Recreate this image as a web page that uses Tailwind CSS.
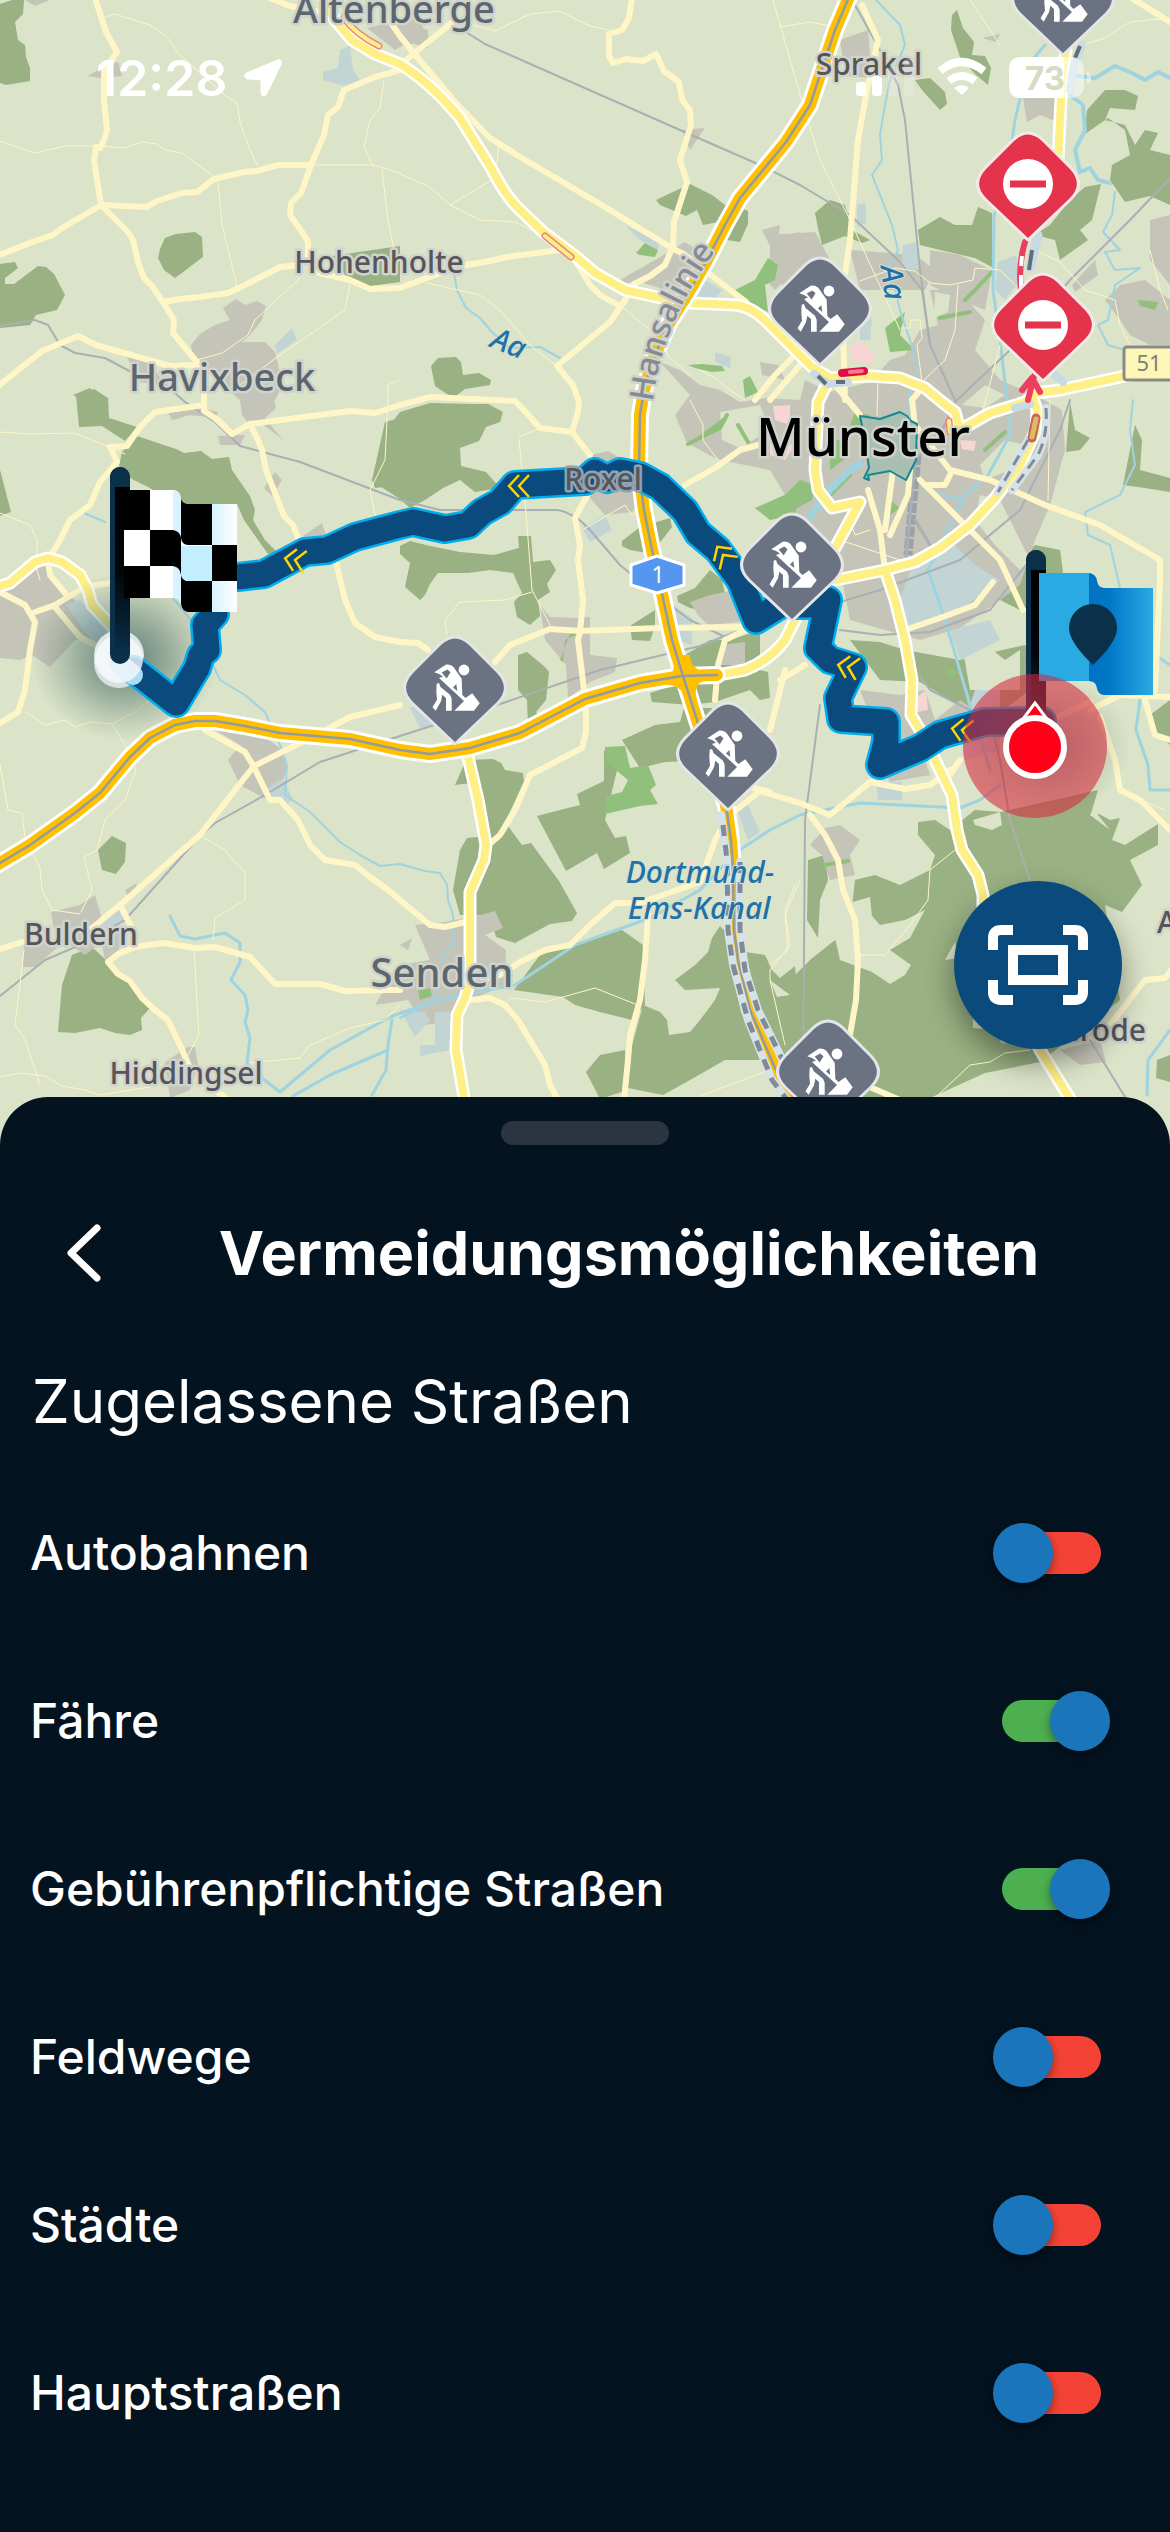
<!DOCTYPE html>
<html lang="de">
<head>
    <meta charset="UTF-8">
    <meta name="viewport" content="width=device-width, initial-scale=1.0">
    <title>Vermeidungsmöglichkeiten</title>
    <script src="https://cdn.jsdelivr.net/npm/@tailwindcss/browser@4"></script>
</head>
<body class="bg-[#03131f] font-['Inter',sans-serif] text-white">
    <div class="flex min-h-screen flex-col overflow-hidden">
        <!-- Map -->
        <div class="relative h-[1145px]">
            <svg class="block h-full w-full bg-[#dbe3c8]" viewBox="0 0 1170 1145" preserveAspectRatio="xMidYMin slice" fill="none" stroke-linejoin="round" stroke-linecap="round" role="img" aria-label="Karte Münster">
                <defs>
                    <g id="worker">
                        <path d="M0 0 L-43 -41 Q-58 -56 -43 -72 L-15 -100 Q0 -114 15 -100 L43 -72 Q58 -56 43 -41Z" fill="#6b7282" stroke="#e4e5e9" stroke-width="3"/>
                        <g fill="#fff" transform="translate(0 -1)">
                            <circle cx="9" cy="-73" r="5.4"/>
                            <path fill-rule="evenodd" d="M-20.700 -70.700 L-9.300 -78.300 Q-5 -79 -1.700 -76.300 L6.700 -64.300 L7.300 -48 L10.500 -45 L17.300 -49.700 L24.700 -39.700 L19 -32.300 H-.7 L9 -42 L-16 -65 L-12 -66.500 L-16 -69Z M-13.300 -70.500 L-7.700 -73.500 L-4.500 -70.700 L-8.300 -64.500Z M-2 -55.500 L1.300 -59 L2.300 -52Z"/>
                            <path d="M-18.300 -59.300 L-16 -60 L-14.500 -56 L-5 -48.300 L-3.300 -44.300 V-32.300 H-9 V-45 L-12.700 -48.300 L-14 -41.700 L-19.300 -32.300 L-22.500 -35.700 L-18 -43.300 L-18.700 -51.700Z"/>
                        </g>
                    </g>
                    <g id="closed">
                        <path d="M0 0 L-43 -41 Q-58 -56 -43 -72 L-15 -100 Q0 -114 15 -100 L43 -72 Q58 -56 43 -41Z" fill="#e6334c" stroke="#f1e9ea" stroke-width="3"/>
                        <circle cy="-56" r="25" fill="#fff"/>
                        <path d="M-18 -56H18" stroke="#e6334c" stroke-width="7" stroke-linecap="butt"/>
                    </g>
                    <path id="dir" d="M0 -11 L-10 0 L0 11 M10 -11 L0 0 L10 11" stroke="#ffd400" stroke-width="2.500" stroke-linecap="butt" stroke-linejoin="miter"/>
                    <path id="a1" d="M852 -10 L835 30 L810 105 L786 142 L740 198 L725 225 L707 260 L690 290 L668 325 L653 360 L644 390 L640 415 L639 470 L644 510 L652 550 L658 575 L672 640 L683 676 L697 720 L712 765 L726 805 L731 840 L733 870 L734 930 L738 960 L750 1010 L775 1068 L805 1115"/>
                    <path id="a43" d="M-10 869 L30 845 L75 813 L100 793 L130 757 L150 738 L175 725 L195 721 L215 721 L245 726 L280 733 L350 739 L400 750 L430 754 L470 748 L520 733 L585 699 L640 683 L682 676 L717 675"/>
                    <path id="hansa" d="M653 402 Q661 325 716 250"/>
                    <g id="trunk">
                        <path d="M322 -5 L335 20 L352 40 L375 54 L400 64 Q430 82 460 118 L490 166 Q505 195 517 207 L543 232 L575 256 L595 273 L625 290 L670 300 L690 303 L735 305 Q750 306 765 320 L812 367 L830 378 L870 376 L900 378 L925 388 L942 402 L955 412 L960 430 L990 413 L1025 402 L1036 393 L1060 390 L1125 376 L1180 368"/>
                        <path d="M830 378 L818 402 L815 470 L818 490 L832 508 L860 502 L835 548 M718 675 L745 670 Q770 660 785 640 L795 620"/>
                        <path d="M836 580 L885 570 L915 562 L940 548 L970 525 L995 498 L1020 465 L1036 430 L1037 410 L1032 396"/>
                        <path d="M885 570 L895 600 L905 640 L912 680 L911 715 L920 730 L935 760 L952 795 L957 830 L962 850 L978 875 L983 895 L983 930 L1040 1050 L1080 1115"/>
                        <path d="M468 757 L478 800 L486 845 L484 860 L470 892 L470 980 L465 998 L457 1015 L456 1050 L467 1115"/>
                        <path d="M-5 588 L10 583 L35 562 L48 558 L62 562 L80 575 L88 590 L92 605 L120 635"/>
                        <path d="M1066 50 L1062 80 L1060 120 L1058 160"/>
                    </g>
                    <linearGradient id="pole" x1="0" y1="0" x2="0" y2="1">
                        <stop offset="0" stop-color="#000"/><stop offset=".5" stop-color="#00060b"/><stop offset="1" stop-color="#0a304a"/>
                    </linearGradient>
                    <linearGradient id="sheen" x1="0" y1="0" x2="1" y2="0">
                        <stop offset="0" stop-color="#d6f3ff"/><stop offset="1" stop-color="#fff"/>
                    </linearGradient>
                    <linearGradient id="fold" x1="0" y1="0" x2="1" y2="0">
                        <stop offset="0" stop-color="#0072c3"/><stop offset=".3" stop-color="#0076c6"/><stop offset="1" stop-color="#2aaae3"/>
                    </linearGradient>
                    <radialGradient id="shade">
                        <stop offset="0" stop-color="#2f5a5c" stop-opacity=".75"/><stop offset=".5" stop-color="#3d6561" stop-opacity=".4"/><stop offset="1" stop-color="#5c7d6c" stop-opacity="0"/>
                    </radialGradient>
                </defs>

                <!-- Forests -->
                <g fill="#99b183">
                    <path d="M0 4 L12 0 H24 L23 14 L15 22 L18 40 L25 45 L26 57 L30 68 V81 L6 85 L0 83Z"/>
                    <path d="M0 264 L15 262 L18 268 L5 278 V284 L14 284 L38 266 L46 267 L54 274 L65 295 L57 310 L36 315 L30 325 L0 328Z"/>
                    <path d="M165 238 L176 234 L195 232 L202 237 L203 257 L175 278 L164 270 L158 258 L160 249Z"/>
                    <path d="M76 395 L94 389 L108 398 L109 418 L137 427 L125 441 L102 426 L79 427Z"/>
                    <path d="M137 436 L176 449 L184 453 L201 451 L212 459 L229 457 L232 470 L250 496 L255 510 L253 520 L265 540 L277 552 L268 554 L244 520 L237 504 L180 510 L150 488 L130 478 L119 466 L122 452Z"/>
                    <path d="M400 412 L430 403 L474 404 L488 404 L503 412 L500 422 L486 427 L479 441 L460 448 L461 466 L469 468 L486 472 L500 488 L475 492 L460 480 L443 488 L425 500 L410 508 L400 499 L378 485 L372 480 L393 421Z"/>
                    <path d="M431 366 L438 358 L456 357 L461 362 L463 375 L479 373 L491 380 L490 385 L465 389 L453 398 L435 386Z"/>
                    <path d="M400 546 L410 541 L430 546 L460 552 L494 555 L519 548 L518 536 L531 536 L533 562 L550 560 L556 570 L547 584 L550 592 L538 600 L540 616 L530 625 L517 617 L514 602 L522 593 L513 573 L490 570 L468 573 L438 573 L430 584 L425 595 L420 600 L405 587 L410 563 L400 554Z"/>
                    <path d="M656 200 L690 184 L712 195 L725 205 L732 204 L748 211 L748 224 L740 242 L727 240 L718 222 L703 225 L697 210 L686 216 L660 205Z"/>
                    <path d="M518 655 L527 652 L545 667 L549 672 L546 700 L536 712 L545 730 L528 727 L527 700 L518 690Z"/>
                    <path d="M622 541 L640 527 L670 518 L672 527 L662 540 L648 553 L630 550 L622 546Z M677 596 L695 588 L710 570 L722 580 L725 594 L712 612 L690 608 L678 602Z M630 626 L655 610 L655 626 L650 641 L632 640Z M730 640 L760 630 V670 L768 672 L770 698 L760 700 L750 690 L715 702 L690 705 L652 702 L650 693 L683 683 L685 655 L710 640Z"/>
                    <path d="M455 785 L466 760 L493 759 L501 763 L505 770 L523 773 L524 782 L505 822 L522 845 L531 843 L559 881 L577 913 L572 921 L550 924 L515 943 L496 937 L490 915 L460 915 L453 890 L460 850 L467 838 L478 837 L480 782Z"/>
                    <path d="M537 816 L568 808 L580 805 L577 794 L604 781 V750 L617 756 L619 762 L605 820 L615 838 L626 836 L630 853 L604 869 L597 853 L566 871Z M622 740 L655 725 L680 722 L684 708 L712 708 L720 760 L665 762 L640 768Z"/>
                    <path d="M514 990 L540 955 L622 930 L643 945 L645 1005 L632 1020 L600 1012 L575 1005 L563 997Z"/>
                    <path d="M643 1005 L660 1012 L667 1020 L669 1035 L690 1032 L700 1020 L715 1000 L720 988 L685 990 L675 980 L695 965 L708 952 L712 938 L720 926 L745 952 L765 955 L772 970 L780 978 L795 966 L803 1060 L760 1060 L725 1060 L690 1080 L663 1095 L628 1088 L628 1060Z M586 1072 L600 1055 L625 1050 L628 1090 L600 1099Z"/>
                    <path d="M58 1032 L62 985 L72 955 L92 947 L108 962 L120 975 L135 983 L141 995 L150 1008 L141 1018 L142 1030 L130 1035 L115 1033 L100 1028 L75 1033Z"/>
                    <path d="M98 850 L112 836 L126 843 L125 862 L116 874 L102 870Z"/>
                    <path d="M957 10 L963 28 L974 42 L972 55 L985 56 L991 68 L988 85 L975 74 L960 57 L951 30 L952 15Z M915 80 L930 78 L945 92 L947 104 L940 110 L922 90Z"/>
                    <path d="M815 213 L830 200 L845 205 L852 230 L870 240 L862 243 L845 236 L822 245 L818 228Z M918 230 L940 217 L955 225 L972 225 L978 207 L992 213 L992 267 L975 258 L940 250 L920 245Z"/>
                    <path d="M1085 134 L1087 110 L1105 90 L1125 90 L1138 96 L1135 110 L1110 108 L1105 120 L1125 125 L1135 145 L1145 130 L1158 133 L1150 150 L1170 155 V205 L1150 196 L1125 202 L1110 180 L1112 165 L1130 155 L1125 130 L1108 118Z M1035 235 L1050 225 L1070 200 L1085 187 L1101 184 L1092 220 L1080 230 L1088 240 L1060 260 L1055 240Z"/>
                    <path d="M1070 402 L1075 430 L1090 438 L1080 450 L1066 452Z M1135 425 L1142 440 L1140 470 L1170 478 V492 L1145 488 L1123 485Z M1010 575 L1035 545 L1060 550 L1063 572 L1045 600 L1020 610 L1000 600Z"/>
                    <path d="M850 640 L880 642 L905 650 L960 660 L1025 645 L1035 660 L1030 690 L990 720 L950 700 L920 682 L880 680Z"/>
                    <path d="M918 822 L935 820 L950 830 L975 810 L1000 812 L1098 790 L1092 810 L1110 820 L1120 818 L1112 840 L1125 845 L1158 824 L1158 845 L1130 860 L1142 885 L1122 912 L1105 905 L1120 1000 L1040 1062 L985 1073 L930 1098 H790 L770 1050 L770 1000 L810 960 L835 940 L848 950 L850 925 L855 880 L875 875 L900 885 L930 870 L935 855 L918 835Z"/>
                    <path d="M808 860 L825 855 L828 880 L820 900 L818 938 L807 920Z"/>
                    <path d="M1157 1060 L1170 1055 V1082 L1156 1078Z M0 470 L11 512 L0 516Z M1170 700 L1150 715 L1155 732 L1170 745Z M385 422 L400 418 V485 L375 488 L372 480Z M332 256 L400 246 V282 L370 286 L345 275Z M73 395 L90 388 L94 394 L82 400Z"/>
                </g>
                <!-- Clearings -->
                <g fill="#dbe3c8">
                    <path d="M842 905 L870 897 L872 916 L880 925 L905 920 L925 910 L910 938 L890 950 L911 965 L905 975 L890 984 L872 972 L840 960 L835 938Z M770 980 L790 995 L777 997Z M945 960 L955 942 L958 958Z M973 820 L1000 812 L1002 825 L992 830 L975 825Z M1103 790 L1098 815 L1110 830 L1090 815Z M973 1018 L1000 1030 L973 1028Z"/>
                </g>
                <!-- Settlements -->
                <g fill="#c5c4b8">
                    <path d="M88 76 L105 66 L118 62 L122 76 L100 78Z M25 0 H50 L35 6Z"/>
                    <path d="M191 345 L200 334 L215 325 L230 320 L223 308 L236 299 L245 305 L257 301 L266 306 L262 320 L250 335 L242 342 L265 342 L275 352 L283 385 L275 400 H240 L205 370 L193 360Z M126 356 L150 362 L165 385 L140 382Z"/>
                    <path d="M240 400 H274 L276 408 L265 418 L283 440 L278 436 L262 424 L250 425 L242 415Z M168 412 L200 408 L218 412 L216 418 L190 415 L172 420Z M218 436 L245 435 L240 445 L220 445Z M264 488 L275 472 L282 480 L272 496Z M303 536 L322 523 L326 535 L310 540Z"/>
                    <path d="M367 28 L400 20 L428 30 L428 48 L408 42 L395 50Z M400 18 L420 20 L428 40 L405 46Z M840 40 L868 30 L872 78 L845 76Z M1023 98 L1055 98 L1058 122 L1040 115 L1027 122Z M982 38 L1000 34 L996 42Z"/>
                    <path d="M620 280 L655 260 L685 242 L697 250 L690 292 L660 288 L640 282 L622 283Z M682 130 L705 128 L690 150Z M762 230 L780 225 L778 238 L800 232 V265 L775 290 L766 280 L772 250Z"/>
                    <path d="M0 595 L20 575 L45 565 L60 590 L75 600 L110 640 L75 640 L50 667 L32 655 L20 660 L0 658Z M228 760 L240 745 L215 730 L262 735 L280 748 L287 768 L280 790 L268 800 L240 785Z"/>
                    <path d="M591 455 L608 451 L620 458 L645 470 L650 490 L632 512 L605 515 L590 498 L580 480Z M540 605 L550 617 L575 618 L590 617 L590 640 L590 655 L617 658 L615 672 L590 682 L568 698 L566 665 L545 640Z M690 602 L710 595 L735 590 L740 622 L708 625 L698 615Z M722 645 L745 642 L745 665 L720 665Z"/>
                    <path d="M415 925 L445 922 L480 915 L495 911 L503 928 L485 935 L506 950 L505 985 L470 1000 L460 1020 L425 1025 L408 1000 L375 1005 L378 1000 L400 965 L430 960Z M400 945 L412 938 L408 950Z"/>
                    <path d="M51 912 L80 905 L95 895 L101 915 L98 945 L85 955 L55 935Z M24 940 L60 945 L35 967 H23Z M100 935 L122 930 L118 955 L105 960Z M165 1062 L188 1047 L195 1047 L198 1065 L190 1090 L170 1098Z M125 890 L137 883 L130 900Z"/>
                    <path d="M810 845 L825 828 L840 825 L860 840 L850 855 L855 875 L830 880 L822 855Z M1060 1050 L1100 1040 L1106 1062 L1080 1065Z"/>
                    <path d="M770 235 L815 232 L830 260 L850 285 L825 320 L790 300 L770 262Z M930 250 L960 255 L970 260 L992 270 L985 310 L960 300 L930 285Z M1150 220 L1170 215 V285 L1150 260Z M1072 285 L1095 260 L1098 275 L1075 292Z M1105 300 L1120 285 L1145 280 L1170 300 V345 L1150 345 L1130 335 L1120 320Z"/>
                    <path d="M660 362 L680 370 L700 385 L720 390 L740 402 L765 398 L800 400 L805 380 L830 392 L870 382 L890 360 L905 355 L920 330 L938 325 L930 290 L958 290 L985 320 L975 350 L1000 380 L1035 395 L1062 410 L1065 450 L1050 505 L1035 540 L1020 585 L1000 600 L960 628 L920 640 L850 620 L842 580 L800 520 L770 470 L730 462 L715 458 L687 443 L675 415 L690 395Z"/>
                    <path d="M860 690 L900 695 L925 690 L935 720 L960 700 L975 710 L925 760 L930 775 L890 782 L880 760 L870 715Z M760 362 L778 365 L785 380 L762 375Z M850 250 L915 255 L935 270 L925 290 L860 290Z M795 450 L770 455 L785 490 L815 510 L820 480Z"/>
                </g>
                <g fill="#dbe3c8">
                    <path d="M980 495 L1000 500 L1015 530 L1030 560 L1020 570 L995 545 L975 520Z M962 645 L980 640 L1005 660 L1020 650 L1020 690 L970 690Z M935 292 L950 295 L948 312 L934 318Z M1005 440 L1025 445 L1010 470 L985 480 L980 465Z M962 405 L985 385 L1005 395 L985 408Z M720 412 L760 405 L770 430 L740 448 L722 440Z"/>
                </g>
                <!-- Parks -->
                <g fill="#91c07c">
                    <path d="M605 747 L625 746 L630 768 L648 765 L656 785 L650 790 L658 804 L640 806 L605 814 L606 796 L622 792 L628 780 L606 762Z"/>
                    <path d="M735 290 L755 280 L768 258 L778 265 L775 280 L765 285 L768 312 L745 302Z M636 253 L645 243 L658 250 L655 257 L640 255Z M885 328 L905 312 L900 335 L915 350 L890 352Z M755 508 L800 488 L795 515 L770 520Z M770 510 L800 480 L815 485 L812 500 L790 512 L770 520Z M688 365 L702 364 L722 366 L725 371 L712 372 L695 368Z M743 380 L750 376 L758 392 L745 398Z M830 440 L845 440 L850 455 L830 470Z M855 412 L870 415 L865 430 L850 425Z M1138 300 L1158 302 L1155 310 L1140 306Z M890 500 L900 508 L890 515Z M418 990 L430 988 L432 996 L420 1000Z M560 660 L570 634 L582 632 L565 640 L563 662Z M945 668 L960 670 L950 680Z"/>
                    <path d="M688 444 L720 428 L727 415 M738 425 L748 442 M965 300 L975 290 L992 272 M940 318 L970 312 M945 570 L975 595 M825 865 L848 861 M830 495 L850 475 M985 450 L1005 432" stroke="#91c07c" stroke-width="4"/>
                </g>
                <!-- Industrial and water areas -->
                <g fill="#c3d4d5">
                    <path d="M340 50 L350 46 L353 70 L360 80 L345 86 L323 80 V72 L338 68Z M275 345 L292 328 L297 340 L277 354Z M626 226 L660 242 L658 250 L640 240Z M705 280 L722 290 L715 300 L695 298Z M715 352 L731 357 L730 368 L715 362Z M903 245 L918 242 L920 270 L902 268Z M857 205 L866 203 L866 223 L857 227Z M998 262 L1016 255 L1020 280 L1005 300 L995 290Z M860 320 L872 318 L870 340 L860 340Z"/>
                    <path d="M582 528 L605 515 L612 530 L590 542Z M410 708 L430 702 L445 722 L420 728Z M673 605 L692 618 L692 645 L675 640Z M96 925 L120 906 L128 920 L110 930Z M265 790 L283 778 L293 800 L285 805Z M66 605 L80 600 L108 630 L95 645Z M737 810 L748 805 L760 832 L748 840Z M400 1010 L425 1012 L430 1020 L415 1037Z M435 1012 L450 1012 L450 1050 L420 1056 V1045 L435 1045Z M876 782 H902 V800 L878 800Z"/>
                    <path d="M925 560 L955 545 L975 565 L1000 580 L960 610 L905 628 L900 600 L910 570Z M950 630 L990 620 L1000 640 L960 660Z M975 690 H1000 V750 L965 760 L960 735Z"/>
                </g>
                <g fill="#f6d5d3">
                    <path d="M850 345 L863 341 L875 356 L872 364 L852 361Z M773 406 L790 405 L790 425 L775 420Z M770 440 L795 445 L785 460 L770 455Z M960 440 L976 441 L974 451 L962 449Z M916 698 L926 690 L928 710 L918 712Z M684 861 L696 860 L694 870Z"/>
                </g>

                <!-- Rivers -->
                <g stroke="#9fd3e0" stroke-width="2">
                    <path d="M454 273 L457 290 L466 308 L480 318 L492 332 L510 348 L540 347 L560 358"/>
                    <path d="M876 0 L900 25 L905 45 L890 80 L885 105 L880 135 L882 160 L872 175 L880 195 L892 225 L898 250 L890 268 L900 310 L910 340 L918 370 L911 390 L908 412"/>
                    <path d="M1066 60 L1070 75 L1095 78 L1115 66 L1130 72 L1145 80 L1158 72 L1170 78 M1070 95 L1083 105 L1085 130 L1075 150 L1080 172 L1090 168 L1098 180 L1110 183" stroke-width="4"/>
                    <path d="M1045 45 L1028 65 L1015 120 L1005 190 L994 215 L993 290 L1000 340 L1007 400" stroke-width="3"/>
                    <path d="M1115 192 L1112 215 L1103 232 L1120 250 L1105 252 L1115 270 L1140 268 L1115 285 L1108 320 L1098 325 L1108 345 L1125 350"/>
                    <path d="M1133 400 L1130 430 L1135 465 L1120 495 L1085 512 L1088 535 L1110 545 L1120 588"/>
                    <path d="M1010 400 V435 L988 475 L965 495 L945 535 L928 570 M925 490 L960 500 M928 570 L945 620 L970 705 L990 770" stroke-width="3"/>
                    <path d="M84 513 L105 522 M173 598 L195 625 L213 665 L220 680 L245 695 L265 712 L280 745 L287 765 L285 795 L310 812 L340 842 L360 855 L380 866 L400 864 L425 871 L440 873 L447 885 L448 900 L453 915 L454 942 L443 955 L442 980 L430 1003 L400 1018"/>
                    <path d="M170 916 L180 936 L195 939 L225 933 L240 943 L240 962 L231 980 L245 995 L248 1010 L245 1022 L250 1038 L247 1063 L258 1075 L280 1092 L330 1050 L390 1017 L415 1008 L455 996 L515 985 L545 965 L575 945 L650 918 L700 890 L735 853 L770 830 L800 815 L860 803 L960 808 L980 800 L1000 785 M293 1096 L330 1075 L388 1050 M372 1095 L386 1070 L388 1045 L392 1020" stroke-width="3"/>
                    <path d="M1140 700 L1136 730 L1148 765 L1150 790 H1170 M1170 1030 L1148 1060 L1147 1095 M1155 655 L1170 665" stroke-width="3"/>
                    <path d="M810 517 L830 490 L850 470 L860 464" stroke-width="7"/>
                </g>

                <!-- Railways -->
                <g stroke="#a9b0b3" stroke-width="2">
                    <path d="M0 326 L35 320 L48 325 L60 345 L75 353 L105 358 L150 382 L165 384 L185 402 L215 422 L240 446 L300 462 L400 500 L440 510 H558 Q575 513 590 530 L620 565 L650 590 L690 620 L725 637"/>
                    <path d="M466 32 L485 44 L680 130 L760 165 L800 185 L850 215 L900 262 L922 290 L930 345 L955 400"/>
                    <path d="M855 5 L880 50 L898 85 L905 120 L912 190 L920 270 L930 345"/>
                    <path d="M1170 178 L1130 220 L1070 280 L1010 350 L955 402"/>
                    <path d="M-5 1000 L45 960 L80 945 L125 920 L200 836 L215 823 L265 795 L320 762 L400 736 L500 704 L600 670 L700 646 L760 622"/>
                    <path d="M820 705 L805 820 L803 1080 M830 605 L880 590 L960 560 L1020 510 L1060 430 L1070 400 M840 630 L880 635 L930 632 L990 610 L1030 560 M910 640 L915 670 L930 690 L990 720 L1000 760 L1010 820 L1030 880 M1090 1040 L1130 1105"/>
                    <path d="M917 455 L908 555" stroke="#98a2a8" stroke-width="9" stroke-dasharray="10 2" stroke-linecap="butt"/>
                    <path d="M955 402 L945 425 L920 455 M915 460 L905 570 M915 520 L930 545" stroke-width="3"/>
                </g>

                <!-- Tracks -->
                <g stroke="#fff6c8" stroke-width="1">
                    <path d="M102 18 L115 14 L150 25 L166 36 L180 55 L210 82 L225 95 L237 103 L240 122 L248 145 L257 165 M0 141 L18 147 L35 153 L65 146 L100 146 L125 148 L142 142 L157 144 L165 150 L182 153 L214 177 M218 182 L222 225 L237 286 M300 278 L255 320 L248 335 L222 353 L197 360 M314 165 H373 L400 173 M384 80 L380 108 L370 120 L364 147 L373 166 M382 170 L388 220 L394 250 M350 285 L345 310 L280 355 L240 385 M400 380 L388 385 V400"/>
                    <path d="M470 24 L495 31 L530 14 L560 11 L590 26 L609 30 M400 174 L430 187 L450 205 L480 220 L515 222 L545 237 L560 250 M450 205 L475 190 L495 178 L499 145 M773 0 L803 105 L820 160 L850 220 L900 330 M427 283 L480 295 L500 310 L530 345 L557 366 M620 305 L650 330 L670 358 L690 375"/>
                    <path d="M0 432 L30 434 L75 433 L125 454 M0 513 L30 525 L37 540 V570 L40 580 M388 400 L385 460 L370 490 L375 515 M519 440 L525 500 L532 590 L550 625 M519 437 L540 428 M532 592 L505 600 L460 602 L445 620 L447 635 M582 530 L625 505 L632 515 L640 513 M25 712 L45 725 L65 720 L75 727 L90 722 L112 724 L135 712 L150 700 M112 724 L125 745 L136 770 L125 800 L105 820 L97 850 L84 857 L92 890 L81 912 M0 765 L8 810 L22 813 L25 838 L40 868 L42 890 L52 910 L80 914 M201 836 L225 850 L245 873 L245 900 L215 918 L213 940 M194 950 L199 1035 L188 1055 M24 950 L15 1025 L25 1040 L40 1085 M0 1077 L20 1073 L45 1076 L62 1086 L85 1090 L100 1095 L150 1087 M250 1063 L300 1058 L310 1045 L350 1028 L385 1020 L400 1005 M510 998 L545 1002 L595 988 L640 1006 M795 885 L785 910 L790 945 L770 970 L770 980 L785 1045 M700 1096 L770 1070 M800 880 L785 915 L788 950 L770 965 M955 850 L930 870 L928 900 L910 925 L885 955 H860 M935 1098 L970 1065 L990 1062 L1005 1053 L1030 1050"/>
                    <path d="M780 27 L810 22 L830 26 M970 0 L990 30 L1000 45 M1083 45 L1105 38 L1130 22 L1170 18 M860 281 L895 268 L915 271 L930 283 L950 285 L973 280 L975 268 L1000 270 L1015 285 M958 285 L955 330 L945 360 L922 382 M902 328 L910 328 L911 320 L920 320 L922 338 L917 345 L922 382 M878 382 L877 415 M983 410 L1000 345 M1035 250 L1060 262 L1085 290 L1115 300 L1120 325 L1130 345 M1150 250 L1160 290 L1168 310 M700 370 L715 378 L730 390 L745 400 M690 400 L703 425 V440 L718 460 M1140 800 L1165 810 M900 560 L870 550 L840 540 M850 520 L855 535 L870 530 M1050 400 L1048 500"/>
                </g>

                <!-- Secondary roads -->
                <g stroke="#fff6c8" stroke-width="6">
                    <path d="M95 -2 L106 32 L117 52 L110 62 L104 64 V100 L107 130 L104 140 L100 148 L96 147 L94 160 L101 205 L128 232 L133 240 L138 262 L144 278 L152 286 L163 302 L174 320 L173 333 L197 362 L204 378 V411 L218 420 L232 434 L250 424 L258 440 L262 450 L266 470 L284 516 L293 525 L302 548"/>
                    <path d="M-3 256 L32 242 L53 235 L62 228 L101 205 L147 207 L157 201 L182 193 L197 192 L214 179 L244 172 L257 171 L278 165 H311"/>
                    <path d="M163 302 L180 299 L200 297 L228 293 L245 285 L280 267 L300 265 M-3 387 L42 351 L78 336 L96 345 L170 366 L197 365"/>
                    <path d="M400 70 L375 77 L344 90 L338 107 L328 115 L324 135 L311 165 L301 193 L291 203 L290 215 L302 232 L308 242 V262 M315 272 L350 280 L370 289 L400 288 L443 272 M466 265 L490 261 L506 257 L560 250"/>
                    <path d="M386 15 L400 36 L417 57 L455 102 L490 138 L520 157 L600 204 L670 247 L685 255 L725 286 L746 302 M406 60 L455 20 M270 -2 L290 6 L320 12 M575 260 L590 285 L600 295 L618 305"/>
                    <path d="M632 -2 L629 18 L622 30 L609 34 V56 L613 63 L626 59 L643 61 L656 54 L664 71 L679 82 L682 100 L690 110 L691 125 L680 160 L687 182 L674 222 L673 246 L665 265 L650 276 L634 284 L625 300 L610 322 L557 366 L573 385 L579 402 L578 412 L572 432 M400 405 L430 397 L515 401 L522 408 L540 428 L572 432 L590 455"/>
                    <path d="M590 490 L575 518 L580 545 L578 560 L583 600 L580 632 L578 640 L584 690 L586 710 V732 L582 748 L530 775 L515 810 L500 835 L492 842"/>
                    <path d="M250 424 L350 411 L375 413 L400 405 M232 434 L215 418 M204 405 L155 412 L140 427 L127 446 L110 447 L117 462 L100 482 L90 505 L70 520 L60 540 L50 557 M0 592 L25 605 L35 622 L30 650 L25 690 L18 712 L-3 725 M35 612 L55 605 L85 587 L110 583 M55 607 L80 637 L95 645 M48 562 L50 575 L65 593"/>
                    <path d="M336 562 L345 600 L355 623 L375 637 L400 642 M205 730 L245 752 L254 767 L270 800 H280 L298 820 L310 845 L325 860 L355 865 L370 877 L388 890 L400 900 L430 925 L445 927 L465 922 M400 705 L350 717 L320 733 L254 766 L235 790 L200 835 L145 883 L120 905 L92 928 M120 905 L132 928 M-3 950 L22 942 M108 962 L118 954 L135 947 L163 943 L195 948 L215 947 L250 957 L262 970 L275 984 H320 L345 991 L390 990 L400 990 M108 962 L118 974 L130 981 L142 998 L155 1010 L168 1020 L180 1045 L190 1068 M215 1090 L232 1102"/>
                    <path d="M400 642 L418 643 L428 650 M495 662 L510 645 L550 629 L580 631 L660 628 L745 627 M745 630 L725 640 L718 665 L715 700 M470 1000 L490 998 L505 1005 L518 1020 L545 1065 L550 1085 L558 1100 M500 975 L520 962 L545 950 L570 945 L590 925 L615 903 H640 L700 882 L715 840 L730 815 L760 791 L800 803 L830 815 L870 782 L905 789 L930 785 L950 770 M648 915 L645 960 L640 1000 L630 1035 L628 1060 L624 1100 M490 978 L465 975 M750 787 L770 792"/>
                    <path d="M862 5 L878 40 L867 90 L858 140 L850 240 L845 275 L843 330 L845 400 M1130 -3 L1170 22 M770 400 L800 365 M836 386 L860 415 M912 400 L922 388 M810 815 L825 835 L838 860 L843 890 L855 920 L858 960 L856 1000 L850 1035 M872 1088 L900 1100"/>
                    <path d="M912 400 L915 425 L950 470 L990 480 L1045 505 L1100 525 L1160 560 M910 470 L908 495 L890 535 M868 490 L880 530 L885 570 M893 470 L885 530 M920 480 L940 500 L1000 560 L1023 610 M905 630 L940 618 L975 605 L993 582 M950 475 L945 485 L925 485 M685 485 L715 468 L740 450 L758 445 M755 400 L775 375 L800 350 M1160 560 V580 L1155 690 M1090 710 L1120 695 L1170 697 M1145 700 L1155 735 L1170 740 M1100 717 L1115 760 L1120 790 L1140 800 L1170 830 M1000 720 L1050 720 L1090 702 M1110 1025 L1145 980 L1165 978 L1173 968 M780 680 L805 665 M770 730 L785 670 M960 760 L950 775"/>
                </g>

                <!-- Trunk roads -->
                <use href="#trunk" stroke="#fff" stroke-width="13"/>
                <use href="#trunk" stroke="#fff086" stroke-width="8"/>
                <!-- Motorways -->
                <g stroke="#fff" stroke-width="18"><use href="#a1"/><use href="#a43"/></g>
                <g stroke="#fec000" stroke-width="12"><use href="#a1"/><use href="#a43"/></g>
                <path d="M660 682 Q676 678 675 655 L690 655 Q690 670 708 672 V680 Q692 682 697 700 L686 700 Q683 684 660 684Z" fill="#fec000"/>
                <g stroke="#929ca0" stroke-width="2.500"><use href="#a1"/><use href="#a43"/></g>

                <!-- Roadworks and closures -->
                <path d="M721 815 L727 860 L728 930 L733 965 L748 1020 L772 1080 L795 1110 M740 862 L740 930 L745 970 L758 1010 L785 1065" stroke="#d6e3e6" stroke-width="8"/>
                <path d="M723 825 L727 860 L728 930 L733 965 L748 1020 L772 1080 L795 1110 M740 862 L740 930 L745 970 L758 1010 L785 1065" stroke="#818b98" stroke-width="5" stroke-dasharray="11 9" stroke-linecap="butt"/>
                <path d="M1046 408 Q1048 435 1038 455 L1012 490 M1028 440 L998 492" stroke="#d6e3e6" stroke-width="8"/>
                <path d="M1046 408 Q1048 435 1038 455 L1012 490 M1028 440 L998 492" stroke="#818b98" stroke-width="3" stroke-dasharray="11 7" stroke-linecap="butt"/>
                <path d="M1082 45 L1074 65 L1070 90" stroke="#c8dae4" stroke-width="8"/>
                <path d="M1080 46 L1075 58" stroke="#616d78" stroke-width="4" stroke-linecap="butt"/>
                <path d="M1038 235 L1030 268" stroke="#c8dae4" stroke-width="9"/>
                <path d="M1032 250 L1029 270" stroke="#616d78" stroke-width="4" stroke-linecap="butt"/>
                <path d="M814 374 L828 384 L848 382 M1015 408 L1030 404 M1055 375 L1063 382" stroke="#c8dae4" stroke-width="8"/>
                <path d="M818 376 L826 384 M836 382 H845" stroke="#616d78" stroke-width="4" stroke-linecap="butt"/>
                <path d="M1025 242 Q1018 265 1021 290" stroke="#ed3d60" stroke-width="6"/>
                <path d="M1022 256 L1021 266 M1021 275 V288" stroke="#fff" stroke-width="4" stroke-linecap="butt"/>
                <path d="M1034 376 L1028 400 M1022 390 L1032 378 L1040 392" stroke="#ed3d60" stroke-width="6"/>
                <path d="M1036 418 L1032 438" stroke="#c9606a" stroke-width="9"/><path d="M1036 419 L1032 437" stroke="#d8bf5d" stroke-width="5"/>
                <path d="M344 18 Q355 34 379 46 M545 236 L571 257 M949 421 L950 432" stroke="#ec8484" stroke-width="7"/>
                <path d="M344 18 Q355 34 379 46 M545 236 L571 257 M949 421 L950 432" stroke="#fff086" stroke-width="4"/>
                <path d="M842 373 L864 371" stroke="#e00d46" stroke-width="8"/><path d="M850 372 L862 371" stroke="#f67a8b" stroke-width="4"/>
                <!-- Old town -->
                <path d="M860 416 L880 419 L900 412 L907 416 L911 421 L917 424 L916 460 L906 480 L890 471 L868 475 L869 480 L864 478 L869 468 L865 440Z" fill="#a9bfb4" stroke="#128a90" stroke-width="2"/>

                <!-- Route -->
                <ellipse cx="125" cy="657" rx="94" ry="84" fill="url(#shade)"/>
                <circle cx="119" cy="655" r="25" fill="#fff" fill-opacity=".75"/>
                <circle cx="119" cy="663" r="25" fill="#f2f5f7" fill-opacity=".75"/>
                <path d="M134 670 L176 703 L197 668 L201 655 L207 650 L205 625 L215 614 M238 577 L264 574 L305 552 L327 550 L355 537 L400 525 L413 522 L445 529 L468 525 L482 512 L500 502 L515 485 L585 481 L595 472 L607 479 L620 472 L640 476 L660 487 L685 511 L698 533 L718 550 L740 580 L756 620 L785 602 M795 605 L808 605 L828 600 L818 648 L830 660 L853 667 L838 698 L841 719 L886 722 L886 742 L880 765 L920 748 L940 735 L985 722 L1042 721" stroke="#00aeef" stroke-width="30"/>
                <path d="M134 670 L176 703 L197 668 L201 655 L207 650 L205 625 L215 614 M238 577 L264 574 L305 552 L327 550 L355 537 L400 525 L413 522 L445 529 L468 525 L482 512 L500 502 L515 485 L585 481 L595 472 L607 479 L620 472 L640 476 L660 487 L685 511 L698 533 L718 550 L740 580 L756 620 L785 602 M795 605 L808 605 L828 600 L818 648 L830 660 L853 667 L838 698 L841 719 L886 722 L886 742 L880 765 L920 748 L940 735 L985 722 L1042 721" stroke="#0b4a7c" stroke-width="25"/>
                <use href="#dir" transform="translate(295 560) rotate(10)"/>
                <use href="#dir" transform="translate(519 486)"/>
                <use href="#dir" transform="translate(723 555) rotate(55)"/>
                <use href="#dir" transform="translate(848 667) rotate(12)"/>
                <use href="#dir" transform="translate(962 730) rotate(8)"/>
                <path d="M133 675 L119 663" stroke="#aadcf5" stroke-width="20"/>
                <circle cx="119" cy="659" r="24" fill="#f4f8fb" fill-opacity=".8"/>

                <!-- Labels -->
                <g font-family="Noto Sans, sans-serif" font-weight="500" stroke="#cfd3cb" stroke-width="5" paint-order="stroke" fill="#5c666e">
                    <text x="394" y="23" font-size="38" text-anchor="middle">Altenberge</text>
                    <text x="222" y="391" font-size="38" text-anchor="middle">Havixbeck</text>
                    <text x="442" y="987" font-size="40" text-anchor="middle">Senden</text>
                    <g fill="#55555a" font-size="30" text-anchor="middle">
                        <text x="379" y="273">Hohenholte</text>
                        <text x="869" y="75">Sprakel</text>
                        <text x="603" y="490" stroke="#8fa3b4">Roxel</text>
                        <text x="81" y="945">Buldern</text>
                        <text x="186" y="1084">Hiddingsel</text>
                        <text x="1146" y="1041" text-anchor="end">Rinkerode</text>
                        <text x="1157" y="933" text-anchor="start">Albersloh</text>
                    </g>
                    <text font-size="33" fill="#868b93"><textPath href="#hansa">Hansalinie</textPath></text>
                    <text x="863" y="456" font-size="53" text-anchor="middle" fill="#000">Münster</text>
                    <g fill="#1f71a8" font-size="30" font-style="italic" text-anchor="middle" stroke="#d9e2d0" stroke-width="2">
                        <text x="700" y="883">Dortmund-</text>
                        <text x="699" y="919">Ems-Kanal</text>
                        <text transform="translate(505 353) rotate(22)">Aa</text>
                        <text transform="translate(883 284) rotate(82)">Aa</text>
                    </g>
                </g>
                <path d="M657 556 L684 565 V585 L657 593 L631 585 V565Z" fill="#5596f0" stroke="#fff" stroke-width="3"/>
                <text x="658" y="583" font-family="Noto Sans, sans-serif" font-size="23" text-anchor="middle" fill="#fff">1</text>
                <rect x="1124" y="347" width="70" height="33" rx="3" fill="#fdf7b7" stroke="#898c85" stroke-width="3"/>
                <text x="1149" y="371" font-family="Noto Sans, sans-serif" font-size="22" text-anchor="middle" fill="#7d7f79">51</text>

                <!-- Markers -->
                <use href="#worker" x="1063" y="55"/>
                <use href="#worker" x="820" y="365"/>
                <use href="#closed" x="1028" y="240"/>
                <use href="#closed" x="1043" y="381"/>
                <use href="#worker" x="792" y="621"/>
                <use href="#worker" x="455" y="744"/>
                <use href="#worker" x="728" y="810"/>
                <use href="#worker" x="828" y="1128"/>

                <!-- Finish flag -->
                <path d="M120 477 V654" stroke="#0a304a" stroke-width="20"/>
                <path d="M115 487 H130 V645 L115 654Z" fill="url(#pole)"/>
                <circle cx="120" cy="477" r="10" fill="#0a304a"/>
                <path d="M124 490 H174 Q181 491 181 500 L183 504 H237 V612 H188 Q182 611 181 604 Q180 598 173 598 H124Z" fill="#fff"/>
                <path d="M173 490 Q181 491 181 502 V540 Q180 531 173 530Z M173 566 H181 V604 Q180 598 173 598Z" fill="#d6f3ff"/>
                <path d="M212 504 H237 V545 H212Z M212 581 H237 V612 H212Z" fill="url(#sheen)"/>
                <path d="M124 490 H150 V530 H124Z M124 566 H150 V598 H124Z M150 530 H173 Q180 531 181 538 Q182 545 188 545 H212 V504 H187 Q182 503 181 499 V575 Q180 567 173 566 H150Z M212 545 H237 V581 H212Z M181 574 Q182 581 188 581 H212 V612 H188 Q182 611 181 604Z" fill="#000"/>
                <path d="M181 546 H212 V581 H188 Q182 581 181 574Z" fill="#c2eeff"/>

                <!-- Start flag -->
                <ellipse cx="1046" cy="745" rx="85" ry="70" fill="url(#shade)" fill-opacity=".6"/>
                <path d="M1036 560 V735" stroke="#0a304a" stroke-width="20"/>
                <path d="M1031 570 H1046 V730 H1031Z" fill="url(#pole)"/>
                <circle cx="1036" cy="560" r="10" fill="#0a304a"/>
                <path d="M1039 573 H1089 Q1096 574 1097 581 Q1098 588 1104 588 H1153 V695 H1104 Q1098 694 1097 688 Q1096 681 1089 681 H1039Z" fill="#2aaae3"/>
                <path d="M1089 573 Q1096 574 1097 581 Q1098 588 1104 588 H1153 V695 H1104 Q1098 694 1097 688 Q1096 681 1089 681Z" fill="url(#fold)"/>
                <path d="M1093 604 a24 24 0 0 1 24 24 q0 14 -24 37 q-24 -23 -24 -37 a24 24 0 0 1 24 -24Z" fill="#0a304a"/>

                <!-- Own position -->
                <circle cx="1035" cy="746" r="72" fill="#d9263b" fill-opacity=".57"/>
                <path d="M1035 703 L1023 719 H1047Z" fill="#ff0019" stroke="#fff" stroke-width="3" stroke-linejoin="miter"/>
                <circle cx="1035" cy="747" r="29" fill="#ff0019" stroke="#fff" stroke-width="6"/>
            </svg>

            <!-- Status bar -->
            <header class="absolute inset-x-0 top-[52px] flex h-[52px] items-center justify-between pl-24 pr-[78px]">
                <div class="flex items-center gap-4">
                    <time class="text-[50px] leading-[52px] font-semibold">12:28</time>
                    <svg class="h-10 w-10" viewBox="0 0 40 40" fill="#fff" stroke="#fff" stroke-width="3" stroke-linejoin="round" aria-hidden="true"><path d="M35 3 Q38 2 37 6 L23 35 Q20 39 19 35 V21 L5 20 Q1 19 4 16Z"/></svg>
                </div>
                <svg class="h-[52px] w-[236px]" viewBox="0 0 236 52" fill="#fff" role="img" aria-label="Akku 73 %">
                    <rect y="30" width="10" height="14" rx="3"/>
                    <rect x="16" y="24" width="10" height="20" rx="3"/>
                    <rect x="32" y="15" width="10" height="29" rx="3" fill-opacity=".2"/>
                    <rect x="48" y="7" width="10" height="37" rx="3" fill-opacity=".2"/>
                    <path d="M84 19 Q105 1 128 19" fill="none" stroke="#fff" stroke-width="8"/>
                    <path d="M93 29 Q105 19 119 29" fill="none" stroke="#fff" stroke-width="8"/>
                    <path d="M98 36 Q106 30 113 36 L106 43Z"/>
                    <rect x="153" y="5" width="75" height="41" rx="12" fill-opacity=".5"/>
                    <path d="M208 5 H165 Q153 5 153 17 V34 Q153 46 165 46 H208Z"/>
                    <path d="M231 19 Q239 26 231 33Z" fill-opacity=".5"/>
                    <text x="189" y="38" font-family="Inter, sans-serif" font-weight="700" font-size="33" text-anchor="middle" fill="#d5dcbf">73</text>
                </svg>
            </header>

            <!-- Fit route button -->
            <button type="button" aria-label="Route einpassen" class="absolute right-12 bottom-24 flex size-[168px] items-center justify-center rounded-full bg-[#0b4a7c] shadow-[0_14px_30px_rgba(0,0,0,0.4)]">
                <svg class="h-20 w-[100px]" viewBox="0 0 100 80" fill="none" stroke="#fff" stroke-width="10" aria-hidden="true">
                    <path d="M5 25 V13 Q5 5 13 5 H25 M75 5 H87 Q95 5 95 13 V25 M95 55 V67 Q95 75 87 75 H75 M25 75 H13 Q5 75 5 67 V55"/>
                    <rect x="25" y="25" width="50" height="30"/>
                </svg>
            </button>
        </div>

        <!-- Bottom sheet -->
        <main class="relative -mt-12 flex-1 rounded-t-[48px] bg-[#03131f] pt-6">
            <div class="mx-auto h-6 w-[168px] rounded-full bg-[#2b3541]"></div>
            <div class="mt-12 flex h-[120px] items-center pr-12 pl-8">
                <button type="button" aria-label="Zurück" class="flex h-full w-[104px] items-center justify-center">
                    <svg class="h-[58px] w-[34px]" viewBox="0 0 34 58" fill="none" stroke="#fff" stroke-width="7" stroke-linecap="round" stroke-linejoin="round" aria-hidden="true"><path d="M30 4 L4 29 L30 54"/></svg>
                </button>
                <h1 class="flex-1 text-center text-[61px] leading-[72px] font-bold">Vermeidungsmöglichkeiten</h1>
            </div>
            <h2 class="mt-[52px] px-8 text-[60px] leading-[72px]">Zugelassene Straßen</h2>
            <div class="mt-8 pr-[69px] pl-[30px] text-[48px] leading-[60px] font-medium">
                <label class="flex h-[168px] items-center justify-between">Autobahnen
                    <input type="checkbox" role="switch" class="relative h-[42px] w-[99px] appearance-none rounded-full bg-[#f44336] before:absolute before:-top-[9px] before:-left-[9px] before:size-[60px] before:rounded-full before:bg-[#1b75bb] before:shadow-[0_4px_10px_rgba(0,0,0,0.4)] checked:bg-[#4caf50] checked:before:left-12">
                </label>
                <label class="flex h-[168px] items-center justify-between">Fähre
                    <input type="checkbox" role="switch" checked class="relative h-[42px] w-[99px] appearance-none rounded-full bg-[#f44336] before:absolute before:-top-[9px] before:-left-[9px] before:size-[60px] before:rounded-full before:bg-[#1b75bb] before:shadow-[0_4px_10px_rgba(0,0,0,0.4)] checked:bg-[#4caf50] checked:before:left-12">
                </label>
                <label class="flex h-[168px] items-center justify-between">Gebührenpflichtige Straßen
                    <input type="checkbox" role="switch" checked class="relative h-[42px] w-[99px] appearance-none rounded-full bg-[#f44336] before:absolute before:-top-[9px] before:-left-[9px] before:size-[60px] before:rounded-full before:bg-[#1b75bb] before:shadow-[0_4px_10px_rgba(0,0,0,0.4)] checked:bg-[#4caf50] checked:before:left-12">
                </label>
                <label class="flex h-[168px] items-center justify-between">Feldwege
                    <input type="checkbox" role="switch" class="relative h-[42px] w-[99px] appearance-none rounded-full bg-[#f44336] before:absolute before:-top-[9px] before:-left-[9px] before:size-[60px] before:rounded-full before:bg-[#1b75bb] before:shadow-[0_4px_10px_rgba(0,0,0,0.4)] checked:bg-[#4caf50] checked:before:left-12">
                </label>
                <label class="flex h-[168px] items-center justify-between">Städte
                    <input type="checkbox" role="switch" class="relative h-[42px] w-[99px] appearance-none rounded-full bg-[#f44336] before:absolute before:-top-[9px] before:-left-[9px] before:size-[60px] before:rounded-full before:bg-[#1b75bb] before:shadow-[0_4px_10px_rgba(0,0,0,0.4)] checked:bg-[#4caf50] checked:before:left-12">
                </label>
                <label class="flex h-[168px] items-center justify-between">Hauptstraßen
                    <input type="checkbox" role="switch" class="relative h-[42px] w-[99px] appearance-none rounded-full bg-[#f44336] before:absolute before:-top-[9px] before:-left-[9px] before:size-[60px] before:rounded-full before:bg-[#1b75bb] before:shadow-[0_4px_10px_rgba(0,0,0,0.4)] checked:bg-[#4caf50] checked:before:left-12">
                </label>
            </div>
        </main>
    </div>
</body>
</html>
